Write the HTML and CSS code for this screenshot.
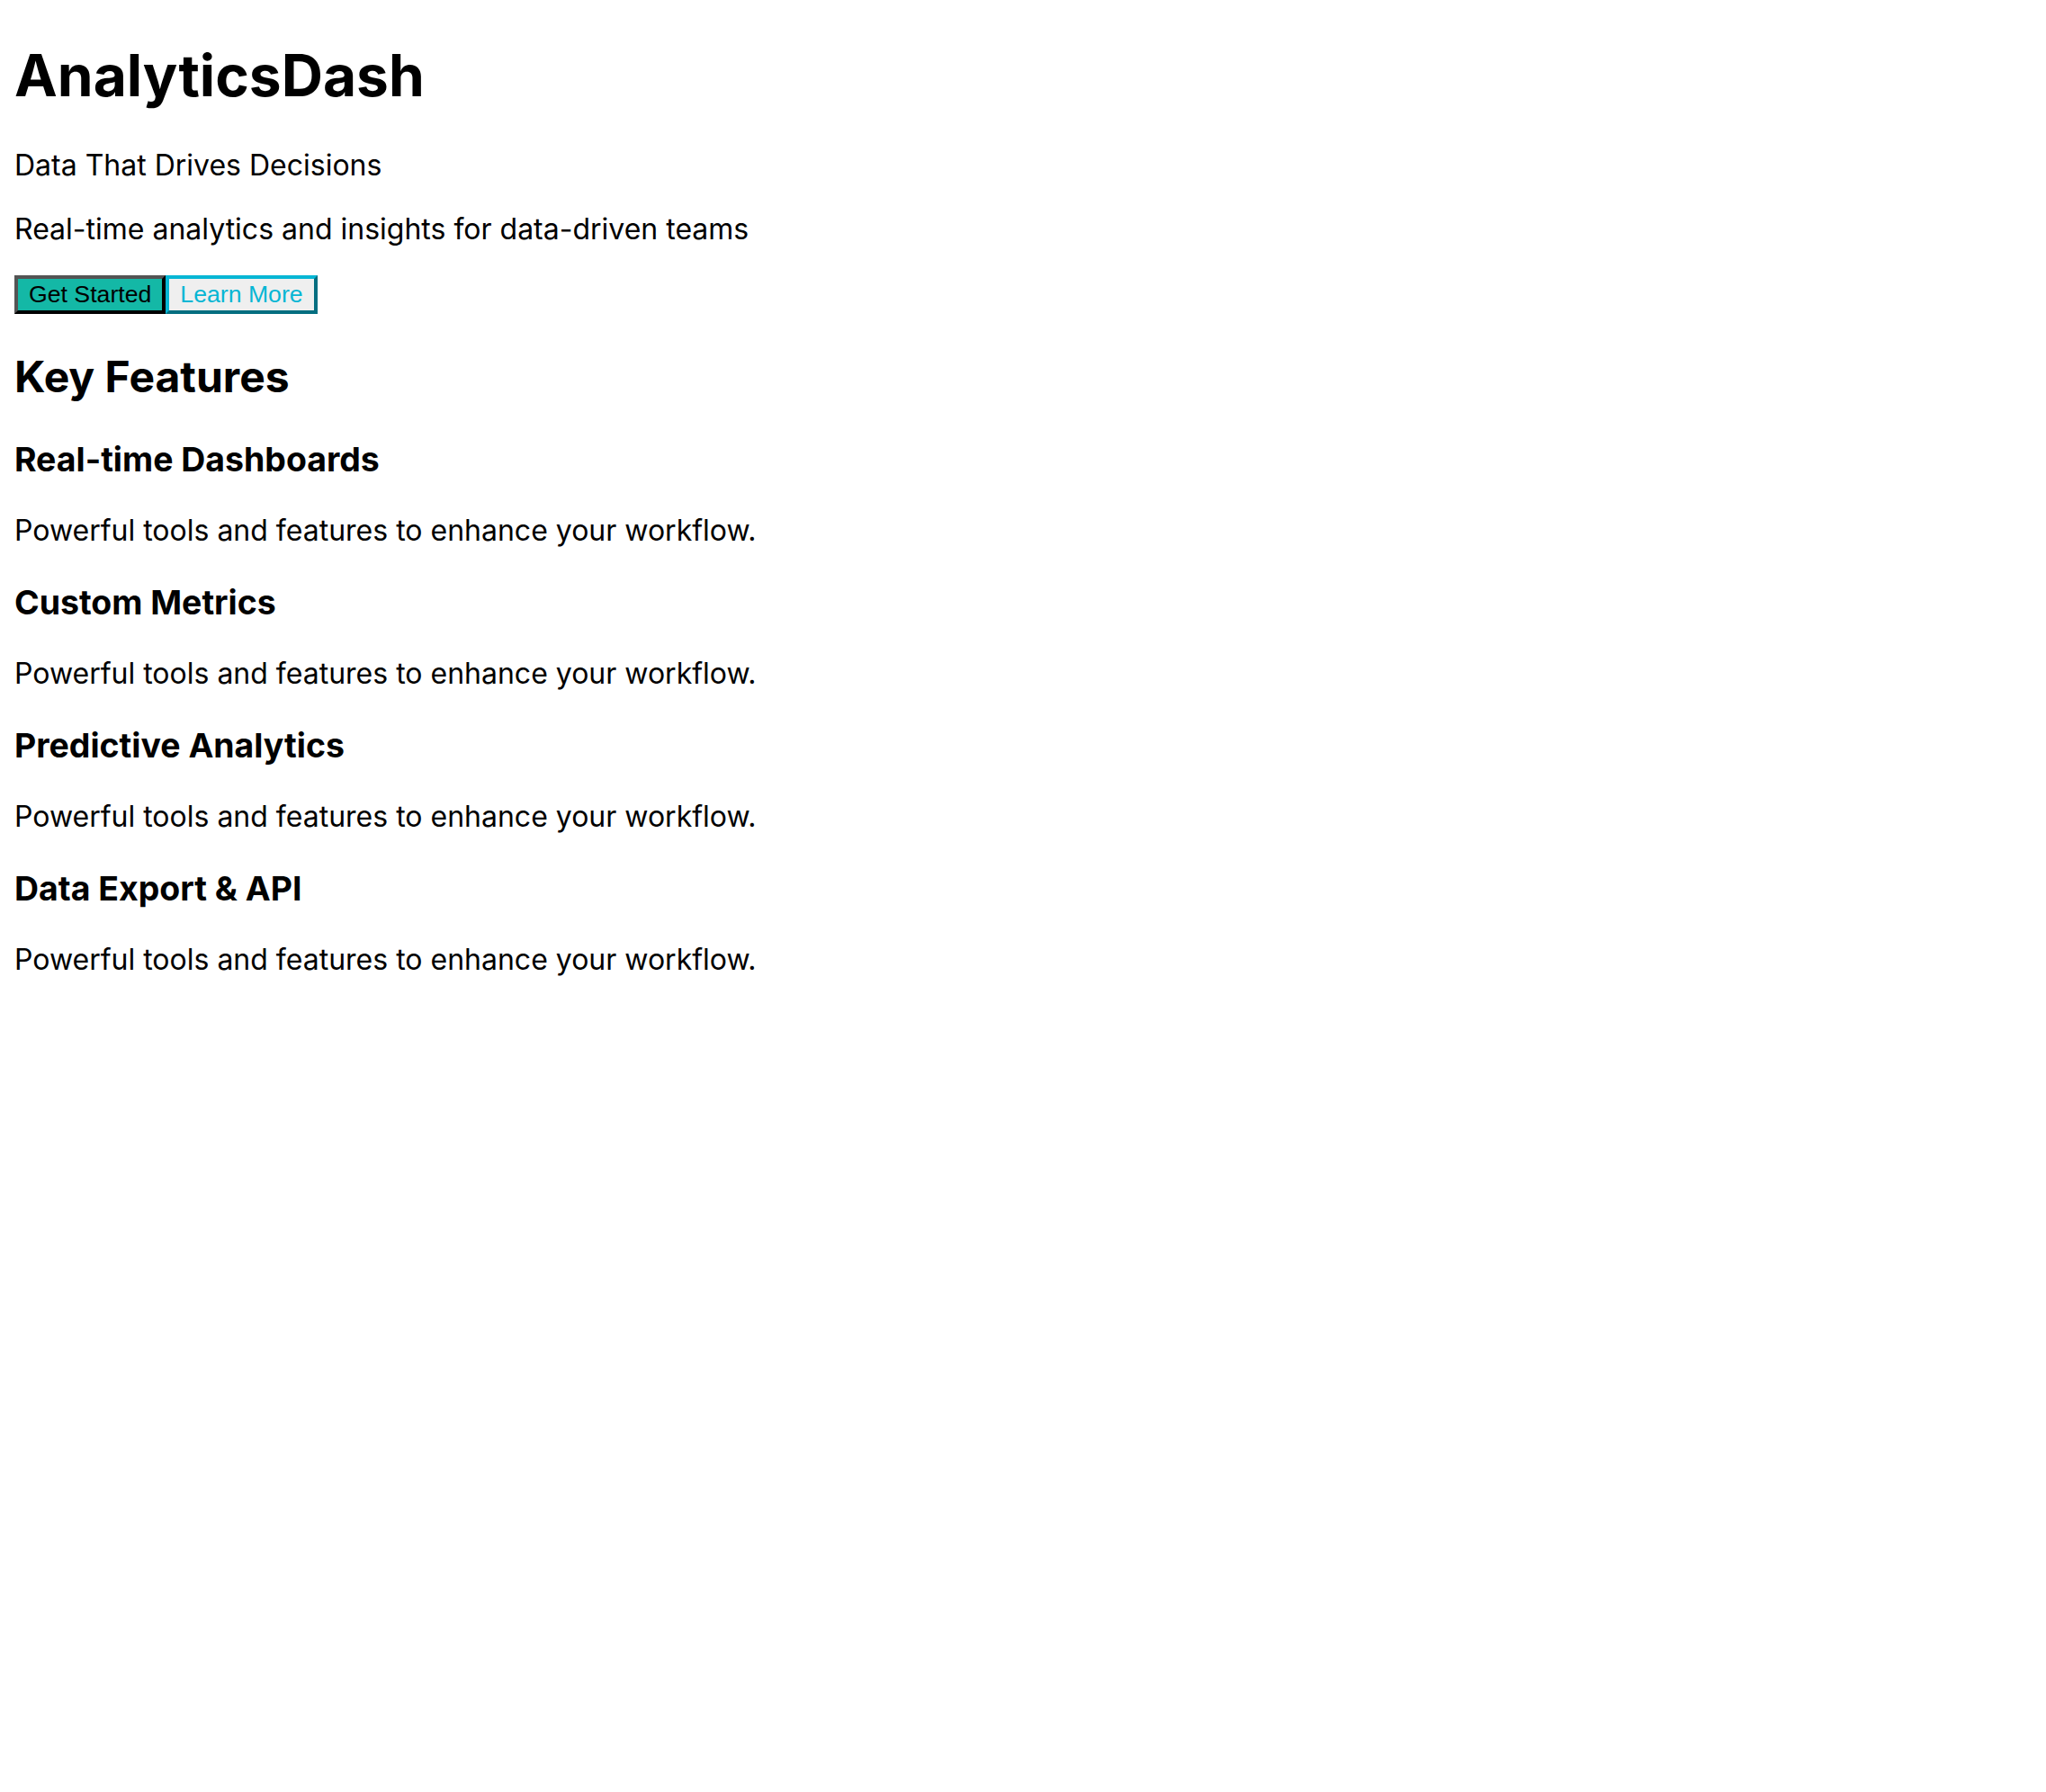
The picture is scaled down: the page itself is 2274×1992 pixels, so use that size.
FILE: index.html
```html
<!DOCTYPE html>
<html lang="en">
<head>
<meta charset="utf-8">
<title>AnalyticsDash</title>
<link rel="stylesheet" href="styles.css">
</head>
<body>
<header class="hero">
  <h1 class="title">AnalyticsDash</h1>
  <p class="text">Data That Drives Decisions</p>
  <p class="text">Real-time analytics and insights for data-driven teams</p>
  <div class="actions">
    <button class="btn btn-primary">Get Started</button>
    <button class="btn btn-secondary">Learn More</button>
  </div>
</header>
<section class="features">
  <h2 class="section-title">Key Features</h2>
  <div class="feature">
    <h3 class="feature-title">Real-time Dashboards</h3>
    <p class="text">Powerful tools and features to enhance your workflow.</p>
  </div>
  <div class="feature">
    <h3 class="feature-title">Custom Metrics</h3>
    <p class="text">Powerful tools and features to enhance your workflow.</p>
  </div>
  <div class="feature">
    <h3 class="feature-title">Predictive Analytics</h3>
    <p class="text">Powerful tools and features to enhance your workflow.</p>
  </div>
  <div class="feature">
    <h3 class="feature-title">Data Export &amp; API</h3>
    <p class="text">Powerful tools and features to enhance your workflow.</p>
  </div>
</section>
</body>
</html>
```
FILE: styles.css
```css
html {
  background: #ffffff;
}
body {
  margin: 16px;
  font-family: Inter, "Noto Sans", sans-serif;
  font-size: 32px;
  color: #000000;
}
.title {
  font-size: 64px;
  font-weight: 700;
  margin: 28.5px 0 42.88px;
}
.text {
  margin: 32px 0;
}
.actions {
  display: flex;
}
.btn {
  font-family: "Liberation Sans", Arial, sans-serif;
  font-size: 26.67px;
  padding: 2px 12px;
  border-width: 4px;
  border-style: solid;
  margin: 0;
  cursor: pointer;
}
.btn-primary {
  background: #14b8a6;
  color: #000000;
  border-color: #545454 #000000 #000000 #545454;
}
.btn-secondary {
  background: #efefef;
  color: #06b6d4;
  border-color: #06b6d4 #046e80 #046e80 #06b6d4;
}
.section-title {
  font-size: 48px;
  font-weight: 700;
  margin: 39.84px 0;
}
.feature-title {
  font-size: 37.44px;
  font-weight: 700;
  margin: 37.44px 0;
}
```
